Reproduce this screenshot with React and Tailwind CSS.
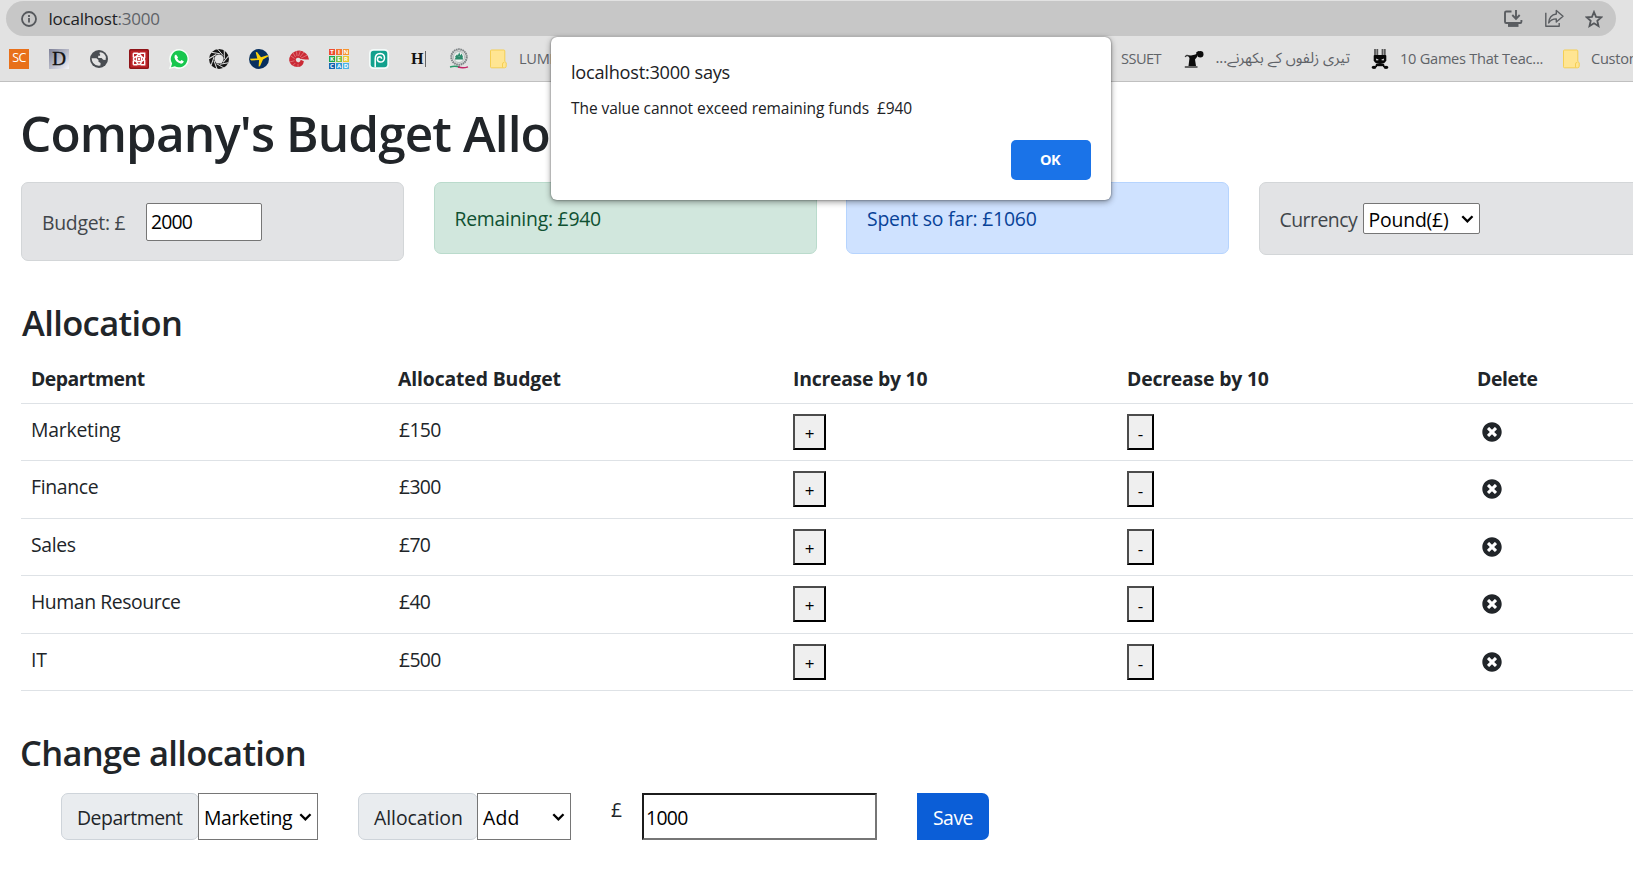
import React from "react";
import { FaTimesCircle } from "react-icons/fa";

const departments = [
  { name: "Marketing", cost: "£150", height: "h-[57px]", track: "tracking-[-0.012em]" },
  { name: "Finance", cost: "£300", height: "h-[58px]", track: "tracking-[-0.018em]" },
  { name: "Sales", cost: "£70", height: "h-[57px]", track: "tracking-[-0.02em]" },
  { name: "Human Resource", cost: "£40", height: "h-[58px]", track: "tracking-[-0.0226em]" },
  { name: "IT", cost: "£500", height: "h-[57px]", track: "tracking-[-0.012em]" },
];

const columns = "grid grid-cols-[367px_395px_334px_350px_1fr]";

function Chevron() {
  return (
    <svg className="h-[8px] w-[13px] shrink-0" viewBox="0 0 13 8" fill="none" stroke="#000" strokeWidth="2.3">
      <path d="M1.3 1.2 6.4 6.3 11.5 1.2" />
    </svg>
  );
}

function InfoIcon() {
  return (
    <svg className="h-[16px] w-[16px] shrink-0" viewBox="0 0 16 16" fill="none" stroke="#55585c" strokeWidth="1.8">
      <circle cx="8" cy="8" r="7" />
      <path d="M8 7v4.6M8 4v1.9" />
    </svg>
  );
}

function InstallIcon() {
  return (
    <svg className="h-[18px] w-[20px]" viewBox="0 0 20 18" fill="none" stroke="#5a5d61" strokeWidth="1.9">
      <path d="M8.5 1.5H3.2Q2 1.5 2 2.7v9Q2 13 3.2 13h14q1.2 0 1.2-1.3V10" />
      <path d="M13 0v8.5M9.3 5l3.7 3.800L16.700 5" />
      <path d="M5 15.200h10.500" strokeWidth="3.400" />
    </svg>
  );
}

function ShareIcon() {
  return (
    <svg className="h-[19px] w-[20px]" viewBox="0 0 20 19" fill="none" stroke="#5a5d61" strokeWidth="1.4" strokeLinejoin="round">
      <path d="M1.800 3.800v13.400h13.400v-3.200" />
      <path d="M12.300 1.500 19 7.300l-6.700 5.700V9.900C9 9.900 6.600 11 4.700 14 5 9.200 7.600 5.600 12.300 5Z" />
    </svg>
  );
}

function StarIcon() {
  return (
    <svg className="h-[18px] w-[18px]" viewBox="0 0 18 18" fill="none" stroke="#55585c" strokeWidth="1.8">
      <path d="m9 2 2 4.900 5.300.4-4 3.500 1.200 5.200L9 13.200 4.500 16l1.200-5.200-4-3.500L7 6.900Z" />
    </svg>
  );
}

function FolderIcon() {
  return (
    <svg className="h-[20px] w-[20px] shrink-0" viewBox="0 0 20 20">
      <path d="M2.500 1h12.300q1 0 1 1v10.500l1.400 1.200v3.500q0 1.600-1.600 1.600H2.500q-1 0-1-1V2q0-1 1-1Z" fill="#ffe592" stroke="#f5cf53" />
      <path d="M13.500 18.500v-3.600q0-1.500 1.800-1.500" fill="none" stroke="#f5cf53" />
    </svg>
  );
}

function GlobeIcon() {
  return (
    <svg className="h-[20px] w-[20px]" viewBox="0 0 20 20">
      <circle cx="10" cy="10" r="9" fill="#494d52" />
      <path d="M2.600 9.200h4.900l2 1.900v1.700l2.100 1.100-.2 2.700q-4.600.8-7.200-2.500Q2.800 12 2.600 9.200ZM11.400 3.200q4.300.7 5.500 4.700l-.3 3.200-2.500-.4-1.500-1.800H9.200V6.800h1.900V5l-1-1Z" fill="#e2e2e2" />
    </svg>
  );
}

function KnotIcon() {
  return (
    <svg className="h-[20px] w-[20px]" viewBox="0 0 20 20">
      <rect width="20" height="20" rx="2" fill="#bb2428" />
      <rect x=".7" y=".7" width="18.600" height="18.600" rx="1.500" fill="none" stroke="#8e1519" strokeWidth="1.400" />
      <g fill="none" stroke="#fff" strokeWidth="1.400">
        <path d="M4.300 4.300h4.200q3.500.8 4 4.200v4q-.5 2.600-2.500 3.200-2-.6-2.500-3.200v-4q.5-3.400 4-4.200h4.200v4.200q-.8 3.500-4.200 4h-4q-2.600-.5-3.200-2.500.6-2 3.200-2.500h4q3.400.5 4.200 4v4.200h-4.200M4.300 4.300v4.200M4.300 15.700h4.200M4.300 15.700v-4.200" />
      </g>
      <circle cx="10" cy="10" r="1.200" fill="#fff" />
    </svg>
  );
}

function WhatsappIcon() {
  return (
    <svg className="h-[20px] w-[20px]" viewBox="0 0 20 20">
      <path d="M10 0a10 10 0 0 1 0 20q-2.600 0-4.600-1.200L0 20l1.500-5A10 10 0 0 1 10 0Z" fill="#f7fff9" />
      <path d="M10.100 1.500a8.400 8.400 0 1 1-4.200 15.700l-3.900 1 1.100-3.800A8.400 8.400 0 0 1 10.100 1.500Z" fill="#17c74e" />
      <path d="M7 5.500q-1.900.7-1.500 3 .8 4.300 6 6.100 2.900.4 3.300-2.400l-2.400-1.200-1.200 1.300q-2-.7-3-2.700l.9-1.200Z" fill="#fff" />
    </svg>
  );
}

function ShutterIcon() {
  const blades = [0, 40, 80, 120, 160, 200, 240, 280, 320];
  return (
    <svg className="h-[20px] w-[20px]" viewBox="0 0 20 20">
      <circle cx="10" cy="10" r="10" fill="#161616" />
      <g stroke="#e2e2e2" strokeWidth="1" fill="none">
        {blades.map((a) => (
          <path key={a} d="M8.500 0 14 6.500" transform={`rotate(${a} 10 10)`} />
        ))}
      </g>
      <circle cx="10" cy="10" r="4.600" fill="#e2e2e2" />
    </svg>
  );
}

function PlaneIcon() {
  return (
    <svg className="h-[20px] w-[20px]" viewBox="0 0 20 20">
      <circle cx="10" cy="10" r="10" fill="#08305f" />
      <path d="M.6 9.800 8.300 9.400 6.700 3.200l1.300-.3 4 5.300 5.500-1.800q2-.3 2 .8l-5.500 3.200-3 6.800-1.400.4.500-6.500-7.800.4Z" fill="#fdd20a" />
    </svg>
  );
}

function ShellIcon() {
  return (
    <svg className="h-[20px] w-[20px]" viewBox="0 0 20 20">
      <path d="M.2 11.500Q.2 5 6 2.500 12-.2 17 4.600q2.800 2.700 3 6l-3.500-.1-2.200-.3-2.600-.2Q9 7.500 7 9.800q-.8 3 2.300 3.600 2.500-.5 2.300-2.600l3.300 1.400Q14 18 8.500 18 1.500 18 .2 11.500Z" fill="#cb2a35" />
      <path d="m5.500 9.500-4.300-3M6.500 8 4 3.800M8 7 7.500 2.300M9.600 7l1.700-5M11 8l4-5M12 9.200l6-3M5.500 11.700.8 13M6.300 14l-2.800 2.800M9 15v3" stroke="#e58b90" strokeWidth=".7" />
    </svg>
  );
}

const tiles = [
  { c: "T", bg: "bg-[#ee4b32]" }, { c: "I", bg: "bg-[#f4742f]" }, { c: "N", bg: "bg-[#f8952c]" },
  { c: "K", bg: "bg-[#1ba84e]" }, { c: "E", bg: "bg-[#7cc242]" }, { c: "R", bg: "bg-[#eac72e]" },
  { c: "C", bg: "bg-[#1566b0]" }, { c: "A", bg: "bg-[#2b96d6]" }, { c: "D", bg: "bg-[#4bb3e6]" },
];

function TileIcon() {
  return (
    <div className="grid h-[20px] w-[20px] grid-cols-3 grid-rows-3 gap-px">
      {tiles.map((t) => (
        <span key={t.c} className={`flex items-center justify-center text-[6px] font-bold leading-[6px] text-white ${t.bg}`}>
          {t.c}
        </span>
      ))}
    </div>
  );
}

function SpiralIcon() {
  return (
    <svg className="h-[20px] w-[20px]" viewBox="0 0 20 20">
      <rect width="20" height="20" rx="4.500" fill="#f4fbfa" />
      <rect x="1.700" y="1.700" width="16.600" height="16.600" rx="3" fill="#12a18d" />
      <path d="M6.200 18.300V10q0-5.500 5-5.500 4.300.3 4.300 4.500-.2 4-4.200 4.100-2.900-.2-2.900-2.900.2-2.300 2.500-2.400 1.700.2 1.700 2" fill="none" stroke="#fff" strokeWidth="1.500" />
    </svg>
  );
}

function SealIcon() {
  return (
    <svg className="h-[21px] w-[20px]" viewBox="0 0 20 21">
      <circle cx="10" cy="9" r="7.700" fill="#dfe3e2" stroke="#7d8385" strokeWidth="2" strokeDasharray="1.600 .6" />
      <circle cx="10" cy="9" r="5.500" fill="#edf1ef" stroke="#9aa0a0" strokeWidth=".6" />
      <path d="M6 10.800h8M6.500 9.200 8 7.500l.8 1.500 1.400-3 1 3 1.300-2 1 2.400M6.500 9.500h7" stroke="#2b8a6b" strokeWidth="1.300" fill="none" />
      <path d="M1 19q5-1.500 10 .2" stroke="#2b9a6b" strokeWidth="1.400" fill="none" />
      <path d="M9 19q5 1.500 10-.2" stroke="#c22566" strokeWidth="1.400" fill="none" />
    </svg>
  );
}

function GramophoneIcon() {
  return (
    <svg className="h-[20px] w-[20px] shrink-0" viewBox="0 0 20 20">
      <path d="M3.500 6.200 7 6.500l4.500-1 1.500-1.800 1 .3-1 4L11 10.500l1 6.500H4.500l1-8Z" fill="#0c0c0c" />
      <path d="M12.500 4 15 2.800" stroke="#0c0c0c" strokeWidth="1.500" />
      <circle cx="16.300" cy="5.300" r="3.200" fill="#0c0c0c" />
      <path d="M.8 18h12.700M1.200 8Q2.500 5.500 5 7" stroke="#3c3c3c" strokeWidth="1.400" fill="none" />
    </svg>
  );
}

function NinjaIcon() {
  return (
    <svg className="h-[20px] w-[18px] shrink-0" viewBox="0 0 18 20">
      <path d="M4 0v6M6.300 0v6M11.500 0v6M13.800 0v6" stroke="#5a5a5a" strokeWidth="1.800" />
      <path d="M3.500 6h11q.8 0 .8 1v4.500q-1.500 3.500-6.300 3.500t-6.300-3.500V7q0-1 .8-1Z" fill="#080808" />
      <path d="M5 9.500 8 11l-2.500.4ZM13 9.500 10 11l2.500.4Z" fill="#fff" />
      <path d="M5 15h8l1 3H4Z" fill="#080808" />
      <ellipse cx="3" cy="18.300" rx="2.400" ry="1.600" fill="#080808" />
      <ellipse cx="15" cy="18.300" rx="2.400" ry="1.600" fill="#080808" />
      <path d="M6 17.500h6" stroke="#e2e2e2" strokeWidth=".8" />
    </svg>
  );
}

function BrowserChrome() {
  return (
    <header className="h-[82px] shrink-0 border-b border-[#c0c0c0] bg-[#e2e2e2]">
      <div className="ml-[6px] mt-[1px] flex h-[35px] w-[1610px] items-center rounded-full bg-[#c7c7c7] pl-[14.500px] pr-[13px]">
        <InfoIcon />
        <div className="ml-[12px] text-[17px] leading-[35px] tracking-[-0.0143em] text-[#202124]">
          localhost<span className="text-[#5f6368]">:3000</span>
        </div>
        <div className="ml-auto flex items-center gap-[21px]">
          <InstallIcon />
          <ShareIcon />
          <StarIcon />
        </div>
      </div>
      <nav className="flex h-[45px] items-center pl-[9px] text-[14.600px] text-[#5f6368]">
        <div className="flex shrink-0 items-center gap-[20px]">
          <div className="flex h-[20px] w-[20px] items-center justify-center bg-[#e8701a] text-[12.500px] leading-none tracking-[-0.04em] text-white">SC</div>
          <div className="flex h-[20px] w-[20px] items-center justify-center bg-linear-to-br from-[#7d8097] to-[#f4f5fb] font-['Liberation_Serif',serif] text-[19px] leading-none text-[#111] [-webkit-text-stroke:0.4px_#111]">D</div>
          <GlobeIcon />
          <KnotIcon />
          <WhatsappIcon />
          <ShutterIcon />
          <PlaneIcon />
          <ShellIcon />
          <TileIcon />
          <SpiralIcon />
          <div className="flex h-[20px] w-[20px] items-center gap-[2px] pl-[2px] font-['Liberation_Serif',serif] text-[16px] font-bold leading-none text-[#111]">
            H<span className="h-[16px] w-px shrink-0 bg-[#666]" />
          </div>
          <SealIcon />
          <FolderIcon />
        </div>
        <span className="ml-[10px] w-[602px] shrink-0 tracking-[-0.02em]">LUMINOUS</span>
        <span className="w-[63px] shrink-0 tracking-[-0.0368em]">SSUET</span>
        <GramophoneIcon />
        <span dir="rtl" className="ml-[10px] w-[136px] shrink-0 whitespace-nowrap text-right font-['Noto_Sans_Arabic','DejaVu_Sans',sans-serif] text-[14.800px] leading-[20px]">
          تیری زلفوں کے بکھرنے...
        </span>
        <span className="ml-[21px] flex">
          <NinjaIcon />
        </span>
        <span className="ml-[11px] w-[162px] shrink-0 whitespace-nowrap tracking-[-0.0181em]">10 Games That Teac...</span>
        <FolderIcon />
        <span className="ml-[9px] shrink-0 tracking-[-0.0181em]">Custom</span>
      </nav>
    </header>
  );
}

function AlertDialog() {
  return (
    <div className="absolute left-[551px] top-[37px] flex h-[163px] w-[560px] flex-col rounded-[6px] bg-white pl-[20px] pr-[20px] pt-[21px] shadow-[0_0_2px_rgba(0,0,0,0.5),0_2px_6px_rgba(0,0,0,0.4)]">
      <h2 className="text-[18.200px] leading-[28px] tracking-[-0.0139em] text-[#202124]">localhost:3000 says</h2>
      <p className="mt-[10px] whitespace-pre text-[15.500px] leading-[24px] tracking-[-0.0045em] text-[#202124]">{"The value cannot exceed remaining funds  £940"}</p>
      <button className="mt-[20px] h-[40px] w-[80px] self-end rounded-[5px] bg-[#1a73e8] pr-[2px] text-[14.500px] font-bold tracking-[-0.04em] text-white">OK</button>
    </div>
  );
}

function SummaryCards() {
  const card = "w-[383px] shrink-0 rounded-[7px] border px-[20px]";
  return (
    <section className="ml-[21px] mt-[19px] flex h-[79px] items-start gap-[29.500px] text-[19.400px] leading-[30px]">
      <div className={`${card} flex h-[79px] items-center border-[#d3d6d8] bg-[#e2e3e5] text-[#41464b]`}>
        <span className="w-[104px] pt-[3px] tracking-[-0.0144em]">Budget: £</span>
        <input
          readOnly
          defaultValue="2000"
          className="h-[38px] w-[116px] rounded-[2px] border border-[#767676] bg-white pl-[4px] tracking-[-0.045em] text-black outline-none"
        />
      </div>
      <div className={`${card} h-[72px] border-[#badbcc] bg-[#d1e7dd] pt-[21px] text-[#0f5132]`}>
        <span className="tracking-[-0.013em]">Remaining: £940</span>
      </div>
      <div className={`${card} h-[72px] border-[#b6d4fe] bg-[#cfe2ff] pt-[21px] text-[#084298]`}>
        <span className="tracking-[-0.012em]">Spent so far: £1060</span>
      </div>
      <div className={`${card} flex h-[73px] border-[#d3d6d8] bg-[#e2e3e5] pt-[20px] text-[#41464b]`}>
        <span className="w-[83px] pt-[2px] tracking-[-0.0259em]">Currency</span>
        <div className="flex h-[31px] w-[117px] items-center justify-between rounded-[2px] border border-[#767676] bg-white pl-[5px] pr-[5px] text-black">
          <span className="pt-[3px] tracking-[-0.0094em]">Pound(£)</span>
          <Chevron />
        </div>
      </div>
    </section>
  );
}

function AllocationTable() {
  const outset =
    "h-[36px] border-2 border-t-[#4c4c4c] border-l-[#4c4c4c] border-r-black border-b-black bg-[#efefef] pt-[3px] text-[17px] leading-none text-black";
  return (
    <div className="ml-[21px] mt-[3px] text-[19.400px] leading-[30px]">
      <div className={`${columns} h-[57px] items-center border-b border-[#dee2e6] pt-[7px] font-bold *:pl-[10px]`}>
        <span className="tracking-[-0.0255em]">Department</span>
        <span className="tracking-[-0.007em]">Allocated Budget</span>
        <span className="tracking-[-0.013em]">Increase by 10</span>
        <span className="tracking-[-0.01em]">Decrease by 10</span>
        <span className="tracking-[-0.0217em]">Delete</span>
      </div>
      {departments.map((d) => (
        <div key={d.name} className={`${columns} ${d.height} border-b border-[#dee2e6] pt-[10px] *:pl-[10px]`}>
          <span className={`pt-px ${d.track}`}>{d.name}</span>
          <span className="ml-px pt-px tracking-[-0.035em]">{d.cost}</span>
          <div>
            <button className={`${outset} block w-[33px]`}>+</button>
          </div>
          <div>
            <button className={`${outset} block w-[27px]`}>-</button>
          </div>
          <div>
            <FaTimesCircle className="ml-[5px] mt-[8px] block h-[20px] w-[20px]" />
          </div>
        </div>
      ))}
    </div>
  );
}

function ChangeAllocation() {
  const label = "flex h-[47px] items-center rounded-[7px] border border-[#ced4da] bg-[#e9ecef] pt-[3px] pl-[15px]";
  const select = "flex h-[47px] items-center justify-between border border-[#767676] bg-white pl-[5px] pr-[5px] text-black";
  return (
    <form className="ml-[61px] mt-[19px] flex h-[47px] text-[19.400px] leading-[30px]">
      <div className={`${label} w-[138px] tracking-[-0.0238em]`}>Department</div>
      <div className={`${select} -ml-px w-[120px]`}>
        <span className="pt-[3px] tracking-[-0.0188em]">Marketing</span>
        <Chevron />
      </div>
      <div className={`${label} ml-[40px] w-[120px] tracking-[-0.0014em]`}>Allocation</div>
      <div className={`${select} -ml-px w-[94px]`}>
        <span className="pt-[3px] tracking-[0.01em]">Add</span>
        <Chevron />
      </div>
      <span className="ml-[40px] w-[31px] pt-[2px]">£</span>
      <input
        readOnly
        defaultValue="1000"
        className="h-[47px] w-[235px] border-2 border-t-[#1c1c1c] border-l-[#1c1c1c] border-r-[#767676] border-b-[#767676] bg-white pl-[2px] pt-[2px] tracking-[-0.035em] text-black outline-none"
      />
      <button type="button" className="ml-[40px] h-[47px] w-[72px] rounded-r-[7px] bg-[#0b5ed7] pt-[3px] tracking-[-0.025em] text-white">
        Save
      </button>
    </form>
  );
}

export default function App() {
  return (
    <div className="relative flex h-[871px] w-[1633px] flex-col overflow-hidden bg-white font-['Open_Sans','Noto_Sans',sans-serif] text-[#212529]">
      <BrowserChrome />
      <main className="flex flex-col">
        <h1 className="ml-[20px] mt-[21px] whitespace-nowrap text-[49.500px] font-semibold leading-[60px] tracking-[-0.0185em]">Company's Budget Allo</h1>
        <SummaryCards />
        <h2 className="ml-[22px] mt-[41px] text-[34.500px] font-semibold leading-[42px] tracking-[-0.018em]">Allocation</h2>
        <AllocationTable />
        <h2 className="ml-[20px] mt-[41px] text-[34.500px] font-semibold leading-[42px] tracking-[-0.0195em]">Change allocation</h2>
        <ChangeAllocation />
      </main>
      <AlertDialog />
    </div>
  );
}
